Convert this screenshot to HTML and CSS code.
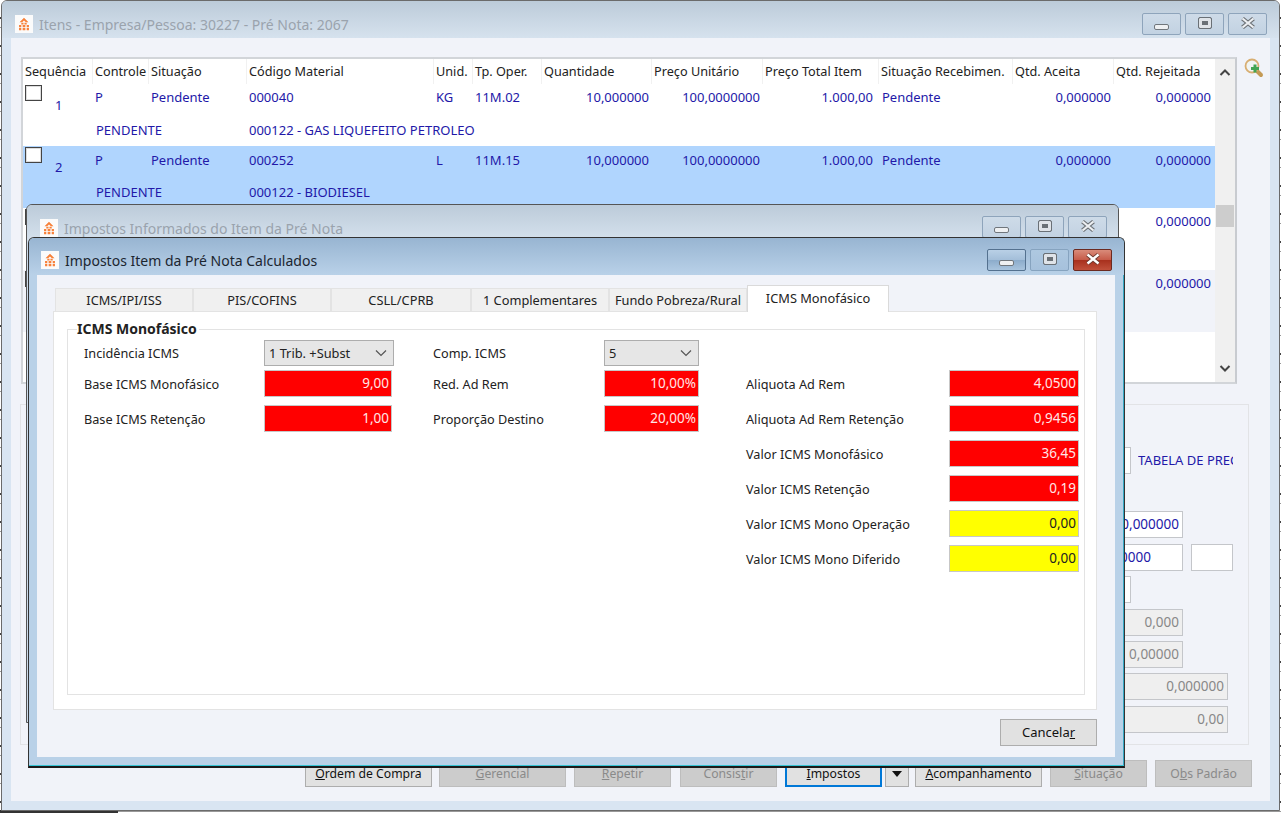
FILE: index.html
```html
<!DOCTYPE html>
<html lang="pt-BR">
<head>
<meta charset="utf-8">
<title>Itens</title>
<link rel="stylesheet" href="styles.css">
</head>
<body>
<svg class="defs" width="0" height="0" aria-hidden="true">
  <symbol id="logo" viewBox="0 0 20 20">
    <rect width="20" height="20" fill="#fbfbfb"/>
    <path d="M10 3 5 8h3l2-2 2 2h3z" fill="#f7813a"/>
    <path d="M7 8.500h2.500v2H7zM10.500 8.500H13v2h-2.500zM4.500 11H7v2.500H4.500zM8.500 11h3v2.500h-3zM13 11h2.500v2.500H13zM4.500 14.500H7V17H4.500zM8.500 14.500h3V17h-3zM13 14.500h2.500V17H13z" fill="#f7813a"/>
  </symbol>
  <symbol id="x-idle" viewBox="0 0 18 12">
    <path d="M3.500 1.500 14.500 10.500M14.500 1.500 3.500 10.500" stroke="#6f7479" stroke-width="4.200"/>
    <path d="M3.500 1.500 14.500 10.500M14.500 1.500 3.500 10.500" stroke="#eceff2" stroke-width="2.200"/>
  </symbol>
  <symbol id="x-close" viewBox="0 0 18 12">
    <path d="M3.500 1.500 14.500 10.500M14.500 1.500 3.500 10.500" stroke="#6d3a30" stroke-width="4.200"/>
    <path d="M3.500 1.500 14.500 10.500M14.500 1.500 3.500 10.500" stroke="#fff" stroke-width="2.400"/>
  </symbol>
</svg>
<div class="desktop">
  <section class="window main-window">
    <header class="titlebar inactive">
      <svg class="app-icon"><use href="#logo"/></svg>
      <span class="title">Itens - Empresa/Pessoa: 30227 - Pré Nota: 2067</span>
      <div class="win-controls">
        <span class="ctl"><i class="glyph-min"></i></span><span class="ctl"><i class="glyph-max"></i></span><span class="ctl ctl-x"><svg width="18" height="12"><use href="#x-idle"/></svg></span>
      </div>
    </header>
    <div class="client main-client">
      <div class="table-row-wrap">
        <div class="grid-table">
          <div class="grid-main">
            <div class="grid-head">
              <span>Sequência</span><span>Controle</span><span>Situação</span><span>Código Material</span><span>Unid.</span><span>Tp. Oper.</span><span>Quantidade</span><span>Preço Unitário</span><span>Preço Total Item</span><span>Situação Recebimen.</span><span>Qtd. Aceita</span><span>Qtd. Rejeitada</span>
            </div>
            <div class="grid-row">
              <div class="seq"><i class="check"></i><b>1</b></div>
              <span>P</span><span>Pendente</span><span>000040</span><span>KG</span><span>11M.02</span><span class="num">10,000000</span><span class="num">100,0000000</span><span class="num total">1.000,00</span><span class="sit-rec">Pendente</span><span class="num">0,000000</span><span class="num last">0,000000</span>
              <span class="line2 c-sit">PENDENTE</span><span class="line2 c-mat">000122 - GAS LIQUEFEITO PETROLEO</span>
            </div>
            <div class="grid-row selected">
              <div class="seq"><i class="check"></i><b>2</b></div>
              <span>P</span><span>Pendente</span><span>000252</span><span>L</span><span>11M.15</span><span class="num">10,000000</span><span class="num">100,0000000</span><span class="num total">1.000,00</span><span class="sit-rec">Pendente</span><span class="num">0,000000</span><span class="num last">0,000000</span>
              <span class="line2 c-sit">PENDENTE</span><span class="line2 c-mat">000122 - BIODIESEL</span>
            </div>
            <div class="grid-row">
              <div class="seq"><i class="check"></i></div>
              <span class="num last">0,000000</span>
            </div>
            <div class="grid-row alt">
              <div class="seq"><i class="check"></i></div>
              <span class="num last">0,000000</span>
            </div>
          </div>
          <div class="scrollbar">
            <svg width="20" height="26" viewBox="0 0 20 26"><path d="M5.500 16 10 11.500 14.500 16" fill="none" stroke="#444" stroke-width="2"/></svg>
            <i class="thumb"></i>
            <svg class="down" width="20" height="26" viewBox="0 0 20 26"><path d="M5.500 10 10 14.500 14.500 10" fill="none" stroke="#444" stroke-width="2"/></svg>
          </div>
        </div>
        <svg class="zoom-icon" width="20" height="20" viewBox="0 0 20 20">
          <path d="m13 13 4 4" stroke="#c49a55" stroke-width="4" stroke-linecap="round"/>
          <circle cx="8" cy="8" r="6.500" fill="#f1f4f3" stroke="#d8ae72" stroke-width="1.800"/>
          <path d="M9.500 6.500h3v2.500H15v3h-2.500v2.500h-3V12H7V9h2.500z" fill="#43a452"/>
        </svg>
      </div>
      <div class="form-panel">
        <div class="f-row r-tab"><i class="box w-tab"></i><span class="blue-label">TABELA DE PREÇO</span></div>
        <div class="f-row r1"><span class="box w-a blue">0,000000</span></div>
        <div class="f-row r2"><span class="box w-a blue left">0000</span><i class="box w-s"></i></div>
        <div class="f-row r3"><i class="box w-t"></i></div>
        <div class="f-row r4"><span class="box off w-a">0,000</span></div>
        <div class="f-row r5"><span class="box off w-a">0,00000</span></div>
        <div class="f-row r6"><span class="box off w-b">0,000000</span></div>
        <div class="f-row r7"><span class="box off w-b">0,00</span></div>
      </div>
      <div class="actions">
        <span class="btn"><u>O</u>rdem de Compra</span>
        <span class="btn off"><u>G</u>erencial</span>
        <span class="btn off small"><u>R</u>epetir</span>
        <span class="btn off small">Consis<u>t</u>ir</span>
        <span class="btn focus"><u>I</u>mpostos</span>
        <span class="btn arrow"><i></i></span>
        <span class="btn wide"><u>A</u>companhamento</span>
        <span class="btn off small"><u>S</u>ituação</span>
        <span class="btn off small">O<u>b</u>s Padrão</span>
      </div>
    </div>
  </section>

  <section class="window back-window">
    <header class="titlebar inactive">
      <svg class="app-icon"><use href="#logo"/></svg>
      <span class="title">Impostos Informados do Item da Pré Nota</span>
      <div class="win-controls">
        <span class="ctl"><i class="glyph-min"></i></span><span class="ctl"><i class="glyph-max"></i></span><span class="ctl ctl-x"><svg width="18" height="12"><use href="#x-idle"/></svg></span>
      </div>
    </header>
  </section>

  <section class="window front-window">
    <header class="titlebar active">
      <svg class="app-icon"><use href="#logo"/></svg>
      <span class="title">Impostos Item da Pré Nota Calculados</span>
      <div class="win-controls">
        <span class="ctl"><i class="glyph-min"></i></span><span class="ctl"><i class="glyph-max"></i></span><span class="ctl ctl-x close"><svg width="18" height="12"><use href="#x-close"/></svg></span>
      </div>
    </header>
    <div class="client front-client">
      <div class="tabs">
        <span class="tab">ICMS/IPI/ISS</span>
        <span class="tab">PIS/COFINS</span>
        <span class="tab">CSLL/CPRB</span>
        <span class="tab">1 Complementares</span>
        <span class="tab">Fundo Pobreza/Rural</span>
        <span class="tab active-tab">ICMS Monofásico</span>
      </div>
      <div class="tab-body">
        <fieldset class="group">
          <legend>ICMS Monofásico</legend>
          <div class="group-grid">
            <div class="col col-1">
              <div class="field"><label>Incidência ICMS</label><span class="select s-1">1 Trib. +Subst<svg width="12" height="8" viewBox="0 0 12 8"><path d="M1 1.500 6 6.500 11 1.500" fill="none" stroke="#555" stroke-width="1.200"/></svg></span></div>
              <div class="field"><label>Base ICMS Monofásico</label><span class="val red v-1">9,00</span></div>
              <div class="field"><label>Base ICMS Retenção</label><span class="val red v-1">1,00</span></div>
            </div>
            <div class="col col-2">
              <div class="field"><label>Comp. ICMS</label><span class="select s-2">5<svg width="12" height="8" viewBox="0 0 12 8"><path d="M1 1.500 6 6.500 11 1.500" fill="none" stroke="#555" stroke-width="1.200"/></svg></span></div>
              <div class="field"><label>Red. Ad Rem</label><span class="val red v-2">10,00%</span></div>
              <div class="field"><label>Proporção Destino</label><span class="val red v-2">20,00%</span></div>
            </div>
            <div class="col col-3">
              <div class="field"><label>Aliquota Ad Rem</label><span class="val red v-3">4,0500</span></div>
              <div class="field"><label>Aliquota Ad Rem Retenção</label><span class="val red v-3">0,9456</span></div>
              <div class="field"><label>Valor ICMS Monofásico</label><span class="val red v-3">36,45</span></div>
              <div class="field"><label>Valor ICMS Retenção</label><span class="val red v-3">0,19</span></div>
              <div class="field"><label>Valor ICMS Mono Operação</label><span class="val yellow v-3">0,00</span></div>
              <div class="field"><label>Valor ICMS Mono Diferido</label><span class="val yellow v-3">0,00</span></div>
            </div>
          </div>
        </fieldset>
      </div>
      <div class="dialog-foot"><span class="btn cancel">Cancela<u>r</u></span></div>
    </div>
  </section>
</div>
</body>
</html>
```

FILE: styles.css
```css
* { box-sizing: border-box; }
html, body { margin: 0; padding: 0; }
body {
  width: 1281px; height: 813px; overflow: hidden; background: #fff;
  font-family: "Noto Sans", "Open Sans", sans-serif; font-size: 13px; color: #222;
}
.defs { position: absolute; }
.desktop {
  position: relative; width: 1281px; height: 813px; overflow: hidden;
  background: repeating-linear-gradient(#fff 0 17px, #444 17px 19px, #fff 19px 27px, #999 27px 28px);
}
.desktop::before { content: ""; position: absolute; left: 0; top: 810px; width: 118px; height: 3px; background: #333; }
i { display: block; font-style: normal; }
.window { position: absolute; border: 1px solid #555; border-radius: 6px 6px 0 0; background: #d9e5f2; overflow: hidden; }
.main-window { left: 1px; top: 0; width: 1279px; height: 811px; border-color: #6b6b6b; }
.back-window { left: 26px; top: 204px; width: 1093px; height: 519px; border-color: #555; background: #cddbe9; }
.front-window { left: 28px; top: 237px; width: 1097px; height: 531px; border-color: #333; border-bottom: 2px solid #1a1a1a; background: #b9d1e8; box-shadow: inset 0 -1px 0 #35c4d4, inset -1px 0 0 #35a8c4; }

.titlebar { height: 37px; display: flex; align-items: center; padding: 9px 0 0 13px; font-size: 14px; }
.titlebar.inactive { background: linear-gradient(#bccbd9, #d6e2ee); }
.titlebar.active { background: linear-gradient(#98b5d2, #b9d1e8); padding: 7px 0 0 12px; }
.titlebar.inactive .title { color: #9aa3ad; }
.titlebar.active .title { color: #1c2630; }
.app-icon { width: 18px; height: 18px; flex: none; margin-right: 6px; }
.win-controls { margin-left: auto; display: flex; gap: 4px; padding-right: 12px; align-self: flex-start; padding-top: 3px; }
.back-window .win-controls { padding-top: 2px; padding-right: 11px; }
.front-window .win-controls { padding-top: 4px; }
.ctl { width: 39px; height: 22px; border: 1px solid #8ea4bb; border-radius: 2px; display: flex; align-items: center; justify-content: center; background: linear-gradient(#cedbe8, #c2d2e2); }
.glyph-min { width: 15px; height: 6px; margin-top: 6px; background: #eef0f2; border: 1px solid #70767c; border-radius: 2px; }
.glyph-max { width: 14px; height: 12px; margin-top: -3px; background: #6a7076; border: 1px solid #6a7076; border-radius: 2px; box-shadow: inset 0 0 0 3px #dfe3e8; }
.ctl-x svg { margin-top: -2px; }
.active .ctl { background: linear-gradient(#b9d0e6 0, #a3bed9 50%, #8caccb 51%, #a9c4de 100%); border-color: #54718f; }
.active .ctl:nth-child(2) { background: linear-gradient(#aec8e0, #a6c1dc); border-color: #86a3bf; }
.active .ctl.close { background: linear-gradient(#d98b7a 0, #c65a48 50%, #a8301d 51%, #c0503b 100%); border-color: #6b2a20; }

.client { background: #f1f3f9; }
.main-client { margin: 0 9px; height: 763px; padding: 19px 10px 0; display: flex; flex-direction: column; }
.table-row-wrap { display: flex; align-items: flex-start; gap: 7px; }
.grid-table { width: 1216px; height: 327px; flex: none; border: 2px solid #d2d5d9; border-right-color: #c8cbd0; background: #fff; display: flex; }
.grid-main { width: 1192px; flex: none; }
.grid-head, .grid-row {
  display: grid;
  grid-template-columns: 69px 56px 98px 187px 39px 69px 110px 111px 116px 134px 101px 102px;
}
.grid-head { height: 25px; background: #fff; font-size: 12.700px; }
.grid-head span { padding-left: 2px; line-height: 25px; border-left: 1px solid #f1f1f1; white-space: nowrap; overflow: hidden; }
.grid-head span:first-child { border-left: 0; }
.grid-row { height: 62px; grid-template-rows: 26px 36px; color: #2218a8; white-space: nowrap; }
.grid-row span { line-height: 26px; padding-left: 3px; }
.grid-row.selected span { line-height: 28px; }
.grid-row .num { text-align: right; padding: 0 2px 0 0; }
.grid-row .num.total { padding-right: 5px; }
.grid-row .num.last { padding-right: 4px; }
.grid-row .sit-rec { padding-left: 4px; }
.grid-row .line2, .grid-row.selected .line2 { grid-row: 2; line-height: 32px; padding-top: 4px; }
.grid-row .c-sit { grid-column: 2 / 4; padding-left: 4px; }
.grid-row .c-mat { grid-column: 4 / 9; }
.grid-row .last { grid-column: 12; }
.grid-row.selected { background: #b0d5fe; }
.grid-row.alt { background: #f1f3f9; }
.seq { grid-row: 1 / 3; padding: 1px 0 0 2px; position: relative; }
.check { width: 17px; height: 16px; background: #fff; border: 1px solid #444; box-shadow: inset 0 0 0 1px #ddd; }
.seq b { position: absolute; left: 32px; top: 14px; font-weight: 400; line-height: 14px; }
.scrollbar { flex: 1; background: #f0f0f0; display: flex; flex-direction: column; align-items: center; position: relative; }
.thumb { position: absolute; left: 1px; right: 1px; top: 146px; height: 22px; background: #cdcdcd; }
.scrollbar .down { margin-top: auto; }
.zoom-icon { margin-top: 1px; flex: none; }

.form-panel { margin: 20px 0 0 -1px; width: 1229px; height: 341px; border: 1px solid #e2e3e6; flex: none; padding: 42px 15px 0 0; display: flex; flex-direction: column; align-items: flex-end; }
.f-row { display: flex; gap: 8px; justify-content: flex-end; white-space: nowrap; }
.box { display: block; height: 27px; background: #fff; border: 1px solid #c4c6ca; line-height: 25px; text-align: right; padding-right: 3px; font-size: 13.500px; }
.box.blue { color: #2218a8; }
.box.left { padding-right: 31px; }
.box.off { background: #efefef; color: #888; }
.w-tab { width: 28px; }
.w-a { width: 70px; }
.w-s { width: 42px; }
.w-t { width: 24px; }
.w-b { width: 120px; }
.r-tab { align-self: stretch; padding-left: 1082px; justify-content: flex-start; height: 27px; gap: 7px; }
.blue-label { color: #2218a8; line-height: 27px; width: 95px; overflow: hidden; display: block; flex: none; }
.r1 { margin: 37px 50px 0 0; }
.r2 { margin: 6px 0 0 0; }
.r3 { margin: 5px 102px 0 0; }
.r4 { margin: 6px 50px 0 0; }
.r5 { margin: 5px 50px 0 0; }
.r6 { margin: 5px 5px 0 0; }
.r7 { margin: 6px 5px 0 0; }

.actions { display: flex; margin: 15px 0 0 284px; gap: 8px; height: 27px; }
.btn { display: block; width: 127px; height: 27px; line-height: 25px; text-align: center; background: #e1e1e1; border: 1px solid #adadad; color: #111; font-size: 12.200px; white-space: nowrap; flex: none; }
.btn.off { background: #cccccc; border-color: #bdbdbd; color: #8a8a8a; }
.btn.off:nth-child(2) { margin-left: -1px; }
.btn.small { width: 97px; }
.btn.small:nth-child(4) { margin-left: 1px; }
.btn.focus { width: 97px; border: 2px solid #0078d7; line-height: 24px; }
.btn.arrow { width: 24px; margin-left: -5px; display: flex; align-items: center; justify-content: center; }
.btn.arrow i { border: 5px solid transparent; border-top: 6px solid #111; border-bottom: 0; }
.btn.wide { margin-left: -2px; }

.front-client { margin: 0 9px 0 8px; height: 482px; padding: 11px 16px 0; display: flex; flex-direction: column; }
.tabs { display: flex; height: 25px; align-items: flex-end; padding-left: 2px; position: relative; z-index: 1; flex: none; }
.tab { width: 138px; height: 23px; background: #f0f0f0; border: 1px solid #e3e3e3; border-bottom: 0; line-height: 22px; text-align: center; color: #222; white-space: nowrap; overflow: hidden; font-size: 12.800px; flex: none; }
.tab:nth-child(3) { width: 140px; }
.active-tab { width: 142px; height: 27px; background: #fff; border-color: #dadada; line-height: 24px; margin-bottom: -1px; }
.tab-body { width: 1044px; height: 399px; background: #fff; border: 1px solid #e3e3e3; padding: 9px 11px 0 13px; flex: none; }
.group { margin: 0; padding: 0; width: 1018px; height: 374px; border: 1px solid #e3e3e3; font-size: 12.700px; }
.group legend { margin-left: 9px; padding: 0 2px 0 0; font-weight: 700; font-size: 14px; line-height: 16px; color: #222; }
.group-grid { display: grid; grid-template-columns: 349px 313px 1fr; padding: 3px 0 0 16px; }
.col-3 { padding-top: 26px; }
.field { display: flex; align-items: center; justify-content: space-between; height: 35px; }
.col-1 .field:first-child, .col-2 .field:first-child { height: 26px; }
.col-1 .field { width: 310px; }
.col-2 .field { width: 266px; }
.col-3 .field { width: 333px; }
.select { height: 26px; display: flex; align-items: center; justify-content: space-between; background: #e6e6e6; border: 1px solid #adadad; padding: 0 6px 0 4px; font-size: 12.800px; }
.s-1 { width: 130px; }
.s-2 { width: 95px; }
.val { height: 27px; line-height: 25px; border: 1px solid #c7c7c7; text-align: right; padding-right: 2px; display: block; font-size: 13.500px; }
.val.red { background: #ff0000; color: #ffe6e6; }
.val.yellow { background: #ffff00; color: #222; }
.v-1 { width: 128px; margin-right: 2px; }
.v-2 { width: 95px; }
.v-3 { width: 130px; }
.dialog-foot { display: flex; justify-content: flex-end; width: 1044px; padding-top: 9px; }
.btn.cancel { width: 97px; height: 27px; line-height: 25px; font-size: 13px; }
```
